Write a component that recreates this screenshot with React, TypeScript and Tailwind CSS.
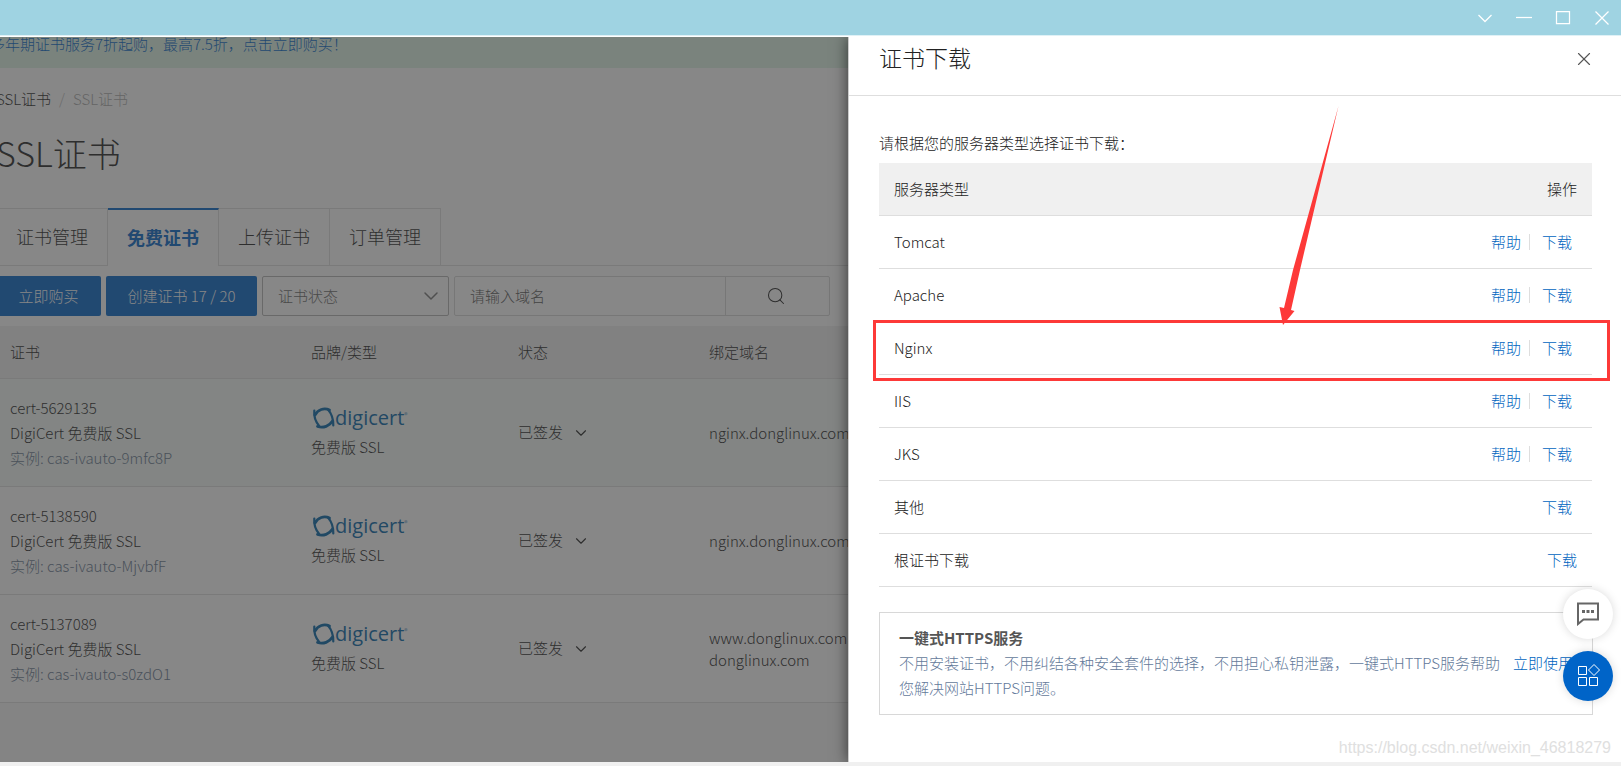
import { ChevronDown, Search, X } from "lucide-react";

type Certificate = {
  id: string;
  instance: string;
  domains: string[];
  active?: boolean;
};

type ServerType = {
  name: string;
  help: boolean;
  last?: boolean;
};

const certificates: Certificate[] = [
  { id: "cert-5629135", instance: "cas-ivauto-9mfc8P", domains: ["nginx.donglinux.com"], active: true },
  { id: "cert-5138590", instance: "cas-ivauto-MjvbfF", domains: ["nginx.donglinux.com"] },
  { id: "cert-5137089", instance: "cas-ivauto-s0zdO1", domains: ["www.donglinux.com", "donglinux.com"] },
];

const servers: ServerType[] = [
  { name: "Tomcat", help: true },
  { name: "Apache", help: true },
  { name: "Nginx", help: true },
  { name: "IIS", help: true },
  { name: "JKS", help: true },
  { name: "其他", help: false },
  { name: "根证书下载", help: false, last: true },
];

const tabs = ["证书管理", "免费证书", "上传证书", "订单管理"];

const windowControls = [
  { label: "菜单", path: "M1.500 5L8 11.500 14.500 5" },
  { label: "最小化", path: "M0 7.500h16" },
  { label: "最大化", path: "M1.500 1.500h13v12h-13z" },
  { label: "关闭窗口", path: "M1.500 1.500l13 13M14.500 1.500l-13 13" },
];

function TitleBar() {
  return (
    <header className="flex h-9 items-center justify-end gap-[23px] border-b border-[#dff1f6] bg-[#9fd3e2] pr-[11px] text-white">
      {windowControls.map((control) => (
        <button key={control.label} aria-label={control.label}>
          <svg width="16" height="16" viewBox="0 0 16 16" fill="none" stroke="currentColor" strokeWidth="1.250">
            <path d={control.path} />
          </svg>
        </button>
      ))}
    </header>
  );
}

function DigicertLogo() {
  return (
    <div className="flex h-6 items-center pl-px text-[#0064a8]">
      <svg width="23" height="24" viewBox="0 0 23 24" fill="none" stroke="currentColor" strokeLinecap="round">
        <path d="M3 9C6 3.500 12 1.500 17.500 4" strokeWidth="2.800" />
        <path d="M16 3.500c3 3.500 5.500 7.500 5.300 16" strokeWidth="2.200" />
        <path d="M20.500 15c-3 5-9 7.500-15 5.500" strokeWidth="2.800" />
        <path d="M7.500 20.500C4.500 17 1.500 12.500 2.300 4.500" strokeWidth="2.200" />
      </svg>
      <span className="font-['Open_Sans',sans-serif] text-[20px] leading-6 font-medium">digicert</span>
      <sup className="text-[7px]">®</sup>
    </div>
  );
}

function Tabs() {
  return (
    <nav className="mt-[35px] flex h-[58px] text-[18px]">
      {tabs.map((tab) =>
        tab === "免费证书" ? (
          <button key={tab} className="w-[111px] border-t-2 border-r border-t-[#0064c8] border-r-[#dedede] pb-0.5 font-bold text-[#0064c8]">
            {tab}
          </button>
        ) : (
          <button key={tab} className="w-[111px] border-y border-r border-[#dedede] pb-0.5 first:w-28 first:border-l">
            {tab}
          </button>
        ),
      )}
      <div className="flex-1 border-b border-[#dedede]" />
    </nav>
  );
}

function Toolbar() {
  return (
    <div className="my-2.5 flex h-10 gap-[5px]">
      <button className="w-[105px] rounded-xs bg-[#0064c8] text-white">立即购买</button>
      <button className="w-[151px] rounded-xs bg-[#0064c8] text-white">创建证书 17 / 20</button>
      <div className="relative w-[187px]">
        <select
          aria-label="证书状态"
          className="h-full w-full appearance-none rounded-xs border border-[#b4b4b4] bg-white px-[15px] text-[#666]"
        >
          <option>证书状态</option>
        </select>
        <ChevronDown size={24} strokeWidth={1.5} className="pointer-events-none absolute top-2 right-1.5 text-[#777]" />
      </div>
      <div className="flex w-[376px] rounded-xs border border-[#d8d8d8]">
        <input
          aria-label="请输入域名"
          placeholder="请输入域名"
          className="min-w-0 flex-1 px-[15px] placeholder:text-[#555]"
        />
        <button aria-label="搜索" className="flex w-[104px] items-center justify-center border-l border-[#d8d8d8] pr-1">
          <Search size={20} strokeWidth={1.25} />
        </button>
      </div>
    </div>
  );
}

function CertificateTable() {
  return (
    <table className="w-full table-fixed border-separate border-spacing-0 text-left [&_td]:border-b [&_td]:border-[#dedede] [&_td]:pl-3.5 [&_th]:border-b [&_th]:border-[#dedede] [&_th]:pl-3.5">
      <thead>
        <tr className="h-[53px] bg-[#f0f0f0]">
          <th className="w-[301px] font-light">证书</th>
          <th className="w-[207px] font-light">品牌/类型</th>
          <th className="w-[191px] font-light">状态</th>
          <th className="font-light">绑定域名</th>
        </tr>
      </thead>
      <tbody>
        {certificates.map((cert) => (
          <tr key={cert.id} className={cert.active ? "h-[108px] bg-[#f4faf7]" : "h-[108px]"}>
            <td className="leading-[25px]">
              <p>{cert.id}</p>
              <p>DigiCert 免费版 SSL</p>
              <p className="text-[#66788f]">实例: {cert.instance}</p>
            </td>
            <td>
              <DigicertLogo />
              <p className="mt-[5px] leading-6">免费版 SSL</p>
            </td>
            <td>
              <button className="flex items-center gap-[9px]">
                已签发
                <ChevronDown size={18} strokeWidth={1.5} />
              </button>
            </td>
            <td className="leading-[22px]">
              {cert.domains.map((domain) => (
                <p key={domain}>{domain}</p>
              ))}
            </td>
          </tr>
        ))}
      </tbody>
    </table>
  );
}

function ConsolePage() {
  return (
    <div className="flex min-h-full flex-col bg-[#f8f8f8]">
      <div className="h-[31px] bg-[#dff6e5] leading-[14px]">
        <a href="#buy" className="-ml-2.5 text-[#0064c8]">
          多年期证书服务7折起购，最高7.5折，点击立即购买！
        </a>
      </div>
      <div className="-ml-1 bg-white">
        <div className="flex gap-2 pt-[21px] leading-5">
          <a href="#ssl">SSL证书</a>
          <span className="text-[#bbb]">/</span>
          <span className="text-[#aaa]">SSL证书</span>
        </div>
        <h1 className="mt-6 text-[34px] leading-10">SSL证书</h1>
        <Tabs />
        <Toolbar />
        <CertificateTable />
      </div>
    </div>
  );
}

function ServerTable() {
  return (
    <table className="w-full border-separate border-spacing-0 text-left [&_td]:border-b [&_td]:border-[#dedede] [&_th]:border-b [&_th]:border-[#dedede]">
      <thead>
        <tr className="h-[53px] bg-[#f0f0f0]">
          <th className="pl-[15px] font-light">服务器类型</th>
          <th className="pr-[15px] text-right font-light">操作</th>
        </tr>
      </thead>
      <tbody>
        {servers.map((server) => (
          <tr key={server.name} className="h-[53px]">
            <td className="pl-[15px]">{server.name}</td>
            <td className={server.last ? "pr-[15px]" : "pr-5"}>
              <div className="flex items-center justify-end text-[#0064c0]">
                {server.help && (
                  <>
                    <a href="#help">帮助</a>
                    <span className="mr-3 ml-2 h-4 w-px bg-[#dedede]" />
                  </>
                )}
                <a href="#download">下载</a>
              </div>
            </td>
          </tr>
        ))}
      </tbody>
    </table>
  );
}

function FloatingActions() {
  return (
    <div className="absolute right-2 bottom-[61px] flex flex-col gap-3">
      <button
        aria-label="咨询"
        className="flex size-[50px] items-center justify-center rounded-full bg-white text-[#666] shadow-[0_0_10px_rgba(0,0,0,0.15)]"
      >
        <svg width="24" height="24" viewBox="0 0 24 24" fill="none" stroke="currentColor" strokeWidth="2">
          <path d="M2 1.500h20v16H7.500L2 22z" />
          <path d="M6 9.500h3M10.500 9.500h3M15 9.500h3" strokeWidth="3" />
        </svg>
      </button>
      <button
        aria-label="应用"
        className="flex size-[50px] items-center justify-center rounded-full bg-[#0064c8] text-white shadow-[0_0_10px_rgba(0,0,0,0.15)]"
      >
        <svg width="24" height="24" viewBox="0 0 24 24" fill="none" stroke="currentColor">
          <path d="M2.500 2.500h8v8h-8zM2.500 13.500h8v8h-8zM13.500 13.500h8v8h-8zM18 0.500l5.500 5.500L18 11.500l-5.500-5.500z" />
        </svg>
      </button>
    </div>
  );
}

function DownloadDrawer() {
  return (
    <aside className="absolute inset-y-0 right-0 w-[773px] max-w-full border-l border-[#ccc] bg-white shadow-[0_0_14px_rgba(0,0,0,0.6)]">
      <div className="flex h-[59px] items-start justify-between border-b border-[#dedede] pt-1 pr-[26px] pl-[30px]">
        <h2 className="text-[23px] leading-8">证书下载</h2>
        <button aria-label="关闭" className="mt-[7px] text-[#555]">
          <X size={22} strokeWidth={1.25} />
        </button>
      </div>
      <div className="pt-[35px] pr-7 pl-[30px]">
        <p className="mb-2 leading-6">请根据您的服务器类型选择证书下载：</p>
        <div className="pr-px">
          <ServerTable />
        </div>
        <div className="mt-[25px] flex gap-3 border border-[#d8d8d8] px-[19px] pt-3 pb-3.5 leading-[25px]">
          <div className="flex-1">
            <h3 className="font-bold text-[#555]">一键式HTTPS服务</h3>
            <p className="text-[#63799a]">
              不用安装证书，不用纠结各种安全套件的选择，不用担心私钥泄露，一键式HTTPS服务帮助您解决网站HTTPS问题。
            </p>
          </div>
          <a href="#use" className="mt-[25px] shrink-0 text-[#0064c0]">
            立即使用
          </a>
        </div>
      </div>

      {/* Marks the Nginx row */}
      <div className="pointer-events-none absolute top-[283px] right-[11px] left-6 h-[61px] border-3 border-[#fd3938]" />
      <svg className="pointer-events-none absolute top-[63px] right-[276px]" width="70" height="230" viewBox="0 0 70 230" fill="#fd3938">
        <path d="M63.500 6L25 170 16 210l3.500 1L8 225 4.500 207l4.500 1L18 170z" />
      </svg>

      <p className="absolute right-2.5 bottom-1 font-['Liberation_Sans',sans-serif] text-[16px] leading-5 font-normal text-[#e0e0e0]">
        https://blog.csdn.net/weixin_46818279
      </p>
      <FloatingActions />
    </aside>
  );
}

export default function App() {
  return (
    <div className="flex min-h-screen flex-col bg-[#f0f0f0] pb-1 font-['Noto_Sans_CJK_SC',sans-serif] text-[15px] font-light text-[#222]">
      <TitleBar />
      <main className="relative flex-1 overflow-hidden border-t border-white bg-[#f8f8f8]">
        <ConsolePage />
        <div className="absolute inset-0 bg-[#373737]/60" />
        <DownloadDrawer />
      </main>
    </div>
  );
}
